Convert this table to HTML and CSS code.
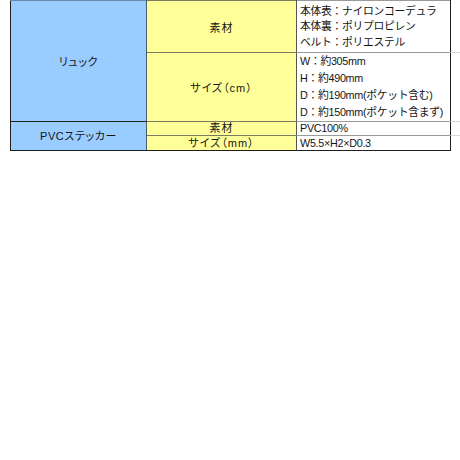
FILE: index.html
```html
<!DOCTYPE html>
<html lang="ja">
<head>
<meta charset="utf-8">
<title>スペック表</title>
<link rel="stylesheet" href="styles.css">
</head>
<body>
<table class="spec">
  <colgroup>
    <col class="c-item">
    <col class="c-label">
    <col class="c-val">
    <col class="c-ext">
  </colgroup>
  <tr class="row-a">
    <td class="item" rowspan="2">リュック</td>
    <td class="label">素材</td>
    <td class="val val-a">本体表：ナイロンコーデュラ<br>本体裏：ポリプロピレン<br>ベルト：ポリエステル</td>
    <td class="ext"></td>
  </tr>
  <tr class="row-b">
    <td class="label">サイズ（cm）</td>
    <td class="val val-b">W：約305mm<br>H：約490mm<br>D：約190mm(ポケット含む)<br>D：約150mm(ポケット含まず)</td>
    <td class="ext"></td>
  </tr>
  <tr class="row-c group">
    <td class="item" rowspan="2">PVCステッカー</td>
    <td class="label">素材</td>
    <td class="val">PVC100%</td>
    <td class="ext"></td>
  </tr>
  <tr class="row-d">
    <td class="label">サイズ（mm）</td>
    <td class="val">W5.5×H2×D0.3</td>
    <td class="ext ext-last"></td>
  </tr>
</table>
</body>
</html>
```
FILE: styles.css
```css
html, body {
  margin: 0;
  padding: 0;
  background: #ffffff;
}
body {
  padding-left: 10px;
  font-family: "Liberation Sans", "Noto Sans CJK JP", sans-serif;
  font-size: 11px;
  color: #151515;
}
.spec {
  border-collapse: collapse;
  table-layout: fixed;
  width: 451px;
}
.c-item { width: 136px; }
.c-label { width: 150px; }
.c-val { width: 154px; }
.c-ext { width: 11px; }

.spec td {
  padding: 0;
  vertical-align: middle;
}
.item {
  background: #99ccff;
  text-align: center;
  border-left: 1px solid #1e1e1e;
  border-right: 1px solid #4a5a6a;
  border-top: 1px solid #6f8aa6;
  border-bottom: 1px solid #1e1e1e;
  font-feature-settings: "palt";
  letter-spacing: 0.6px;
}
.label {
  background: #ffff99;
  text-align: center;
  border-top: 1px solid #7a7a60;
  border-bottom: 1px solid #7a7a60;
  border-right: 1px solid #555555;
  font-feature-settings: "palt";
  letter-spacing: 1px;
}
.val {
  background: #ffffff;
  text-align: left;
  padding-left: 3px !important;
  border-top: 1px solid #9a9a9a;
  border-bottom: 1px solid #9a9a9a;
  border-right: 1px solid #1e1e1e;
  white-space: nowrap;
  letter-spacing: -0.3px;
  font-size: 10.8px;
}
.ext {
  border-bottom: 1px solid #d8d8d8;
}
.ext-last {
  border-bottom: none;
}
.row-a td { height: 49px; }
.row-b td { height: 68px; }
.row-c td { height: 13px; line-height: 13px; }
.row-d td { height: 14px; line-height: 14px; }

.val-a {
  line-height: 15.5px;
  vertical-align: bottom !important;
  padding-bottom: 2px !important;
}
.val-b {
  line-height: 17px;
}
.group td.item,
.group td.label,
.group td.val {
  border-top: 1px solid #1e1e1e;
}
.row-b td.item,
.row-d td.label,
.row-d td.val {
  border-bottom: 1px solid #1e1e1e;
}
```
